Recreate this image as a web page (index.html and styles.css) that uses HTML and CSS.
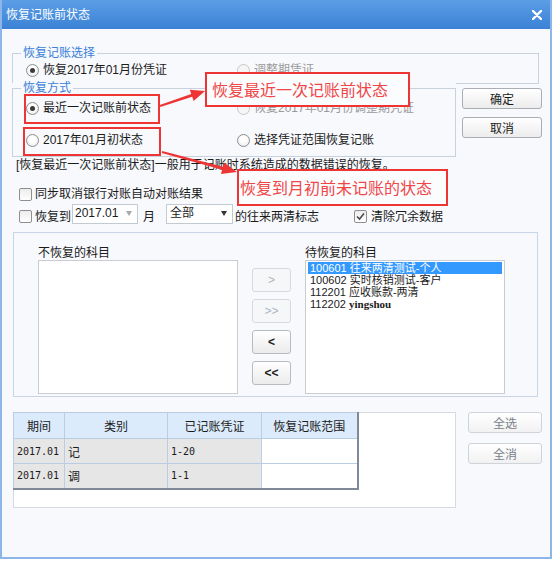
FILE: index.html
```html
<!DOCTYPE html>
<html lang="zh-CN">
<head>
  <meta charset="UTF-8" />
  <title>恢复记账前状态</title>
  <link rel="stylesheet" href="styles.css">
</head>
<body>

  <div class="window">
    <div class="titlebar">
      <span class="title">恢复记账前状态</span>
      <svg class="close" width="10" height="10" viewBox="0 0 10 10">
        <path d="M1 1 L9 9 M9 1 L1 9" stroke="#fff" stroke-width="2.4" stroke-linecap="round" />
      </svg>
    </div>

    <div class="content">
      <fieldset class="group group-select">
        <legend>恢复记账选择</legend>
        <div class="opts">
          <label class="opt"><span class="radio checked"></span>恢复2017年01月份凭证</label>
          <label class="opt disabled"><span class="radio"></span>调整期凭证</label>
        </div>
      </fieldset>

      <div class="mode-row">
        <fieldset class="group group-mode">
          <legend>恢复方式</legend>
          <div class="opts">
            <label class="opt"><span class="radio checked"></span>最近一次记账前状态</label>
            <label class="opt disabled"><span class="radio"></span>恢复2017年01月份调整期凭证</label>
            <label class="opt"><span class="radio"></span>2017年01月初状态</label>
            <label class="opt"><span class="radio"></span>选择凭证范围恢复记账</label>
          </div>
        </fieldset>
        <div class="side">
          <button class="btn">确定</button>
          <button class="btn">取消</button>
        </div>
      </div>

      <p class="desc">[恢复最近一次记账前状态]一般用于记账时系统造成的数据错误的恢复。</p>

      <div class="check-row">
        <span class="checkbox"></span>
        <span>同步取消银行对账自动对账结果</span>
      </div>

      <div class="check-row row-restore">
        <span class="checkbox"></span>
        <span>恢复到</span>
        <span class="combo combo-date"><span>2017.01</span><i class="caret grey"></i></span>
        <span class="month">月</span>
        <span class="combo combo-all"><span>全部</span><i class="caret"></i></span>
        <span class="flag">的往来两清标志</span>
        <span class="checkbox checked">
          <svg width="11" height="11" viewBox="0 0 11 11"><polyline points="2,5.5 4.5,8 9,2.5" fill="none" stroke="#4a4a4a" stroke-width="1.6" /></svg>
        </span>
        <span>清除冗余数据</span>
      </div>

      <div class="subjects">
        <div class="list-col">
          <div class="list-label">不恢复的科目</div>
          <div class="list"></div>
        </div>
        <div class="move-btns">
          <button class="small-btn off">&gt;</button>
          <button class="small-btn off">&gt;&gt;</button>
          <button class="small-btn">&lt;</button>
          <button class="small-btn">&lt;&lt;</button>
        </div>
        <div class="list-col">
          <div class="list-label">待恢复的科目</div>
          <div class="list">
            <div class="item selected">100601 往来两清测试-个人</div>
            <div class="item">100602 实时核销测试-客户</div>
            <div class="item">112201 应收账款-两清</div>
            <div class="item">112202 <span class="latin">yingshou</span></div>
          </div>
        </div>
      </div>

      <div class="bottom">
        <div class="table-box">
          <table class="periods">
            <tr>
              <th class="c1">期间</th>
              <th class="c2">类别</th>
              <th class="c3">已记账凭证</th>
              <th class="c4">恢复记账范围</th>
            </tr>
            <tr>
              <td class="mono">2017.01</td>
              <td>记</td>
              <td class="mono">1-20</td>
              <td class="blank"></td>
            </tr>
            <tr>
              <td class="mono">2017.01</td>
              <td>调</td>
              <td class="mono">1-1</td>
              <td class="blank"></td>
            </tr>
          </table>
        </div>
        <div class="select-btns">
          <button class="btn light">全选</button>
          <button class="btn light">全消</button>
        </div>
      </div>
    </div>
  </div>

  <!-- red annotations drawn over the dialog -->
  <div class="note note-a"></div>
  <div class="note note-b"></div>
  <div class="note note-c">恢复最近一次记账前状态</div>
  <div class="note note-d">恢复到月初前未记账的状态</div>
  <svg class="arrows" width="554" height="561">
    <polygon points="159.7,105 191.2,94 189.8,89.7 205,91 193.6,101.1 192.2,96.8 160.3,107" fill="#ee3535" />
    <polygon points="162.2,151 222.9,166.8 224,162.4 237,172 221,174 222.1,169.7 161.8,153" fill="#ee3535" />
  </svg>

</body>
</html>
```

FILE: styles.css
```css
* {
  box-sizing: border-box;
}

body {
  margin: 0;
  font-family: "Liberation Sans", "Noto Sans CJK SC", sans-serif;
  font-size: 12px;
  color: #1b1b1b;
  background: #fff;
}

.window {
  width: 552px;
  height: 559px;
  border: 2px solid #8db5e8;
  border-top: none;
  background: #f7f9fd;
  overflow: hidden;
}

.titlebar {
  height: 29px;
  display: flex;
  align-items: center;
  justify-content: space-between;
  padding: 0 8px 0 4px;
  background: linear-gradient(#5b9ee6, #3b82d6);
  color: #fff;
}

.title {
  font-size: 12px;
  line-height: 14px;
}

.content {
  padding: 0 8px 0 10px;
}

/* group boxes */
.group {
  margin: 0;
  padding: 0 0 0 8px;
  border: 1px solid #c8d2de;
  min-width: 0;
}

.group legend {
  padding: 0 2px;
  line-height: 14px;
  color: #3b7fd8;
}

.group-select {
  margin-top: 17px;
  width: 527px;
  border-bottom: none;
  padding-top: 3px;
  padding-bottom: 6px;
}

.opts {
  margin-left: 5px;
  display: grid;
  grid-template-columns: 211px auto;
  row-gap: 18px;
}

.opt {
  display: flex;
  align-items: center;
  gap: 4px;
  height: 14px;
  line-height: 14px;
  white-space: nowrap;
}

.opt.disabled {
  color: #9a9a9a;
}

.radio {
  width: 13px;
  height: 13px;
  border-radius: 50%;
  border: 1px solid #8e8e8e;
  background: radial-gradient(circle at 50% 40%, #fff 30%, #e4e4e4 100%);
  display: flex;
  align-items: center;
  justify-content: center;
  flex-shrink: 0;
}

.radio.checked::after {
  content: '';
  width: 5px;
  height: 5px;
  border-radius: 50%;
  background: #3a3a3a;
}

.opt.disabled .radio {
  border-color: #c8c8c8;
  background: #f5f5f5;
}

.mode-row {
  display: flex;
  margin-top: -2px;
}

.group-mode {
  width: 444px;
  padding-top: 6px;
  padding-bottom: 9px;
}

.side {
  width: 86px;
  display: flex;
  flex-direction: column;
}

.side::before {
  content: '';
  display: block;
  width: 83px;
  height: 1px;
  margin-top: 2px;
  background: #c8d2de;
}

.btn {
  font-family: inherit;
  font-size: 12px;
  color: #1b1b1b;
  border: 1px solid #a9aeb4;
  border-radius: 3px;
  background: linear-gradient(#ffffff, #ececec);
  padding: 0;
}

.side .btn {
  width: 80px;
  height: 21px;
  margin-left: 6px;
  margin-top: 4px;
}

.side .btn + .btn {
  margin-top: 8px;
}

.desc {
  margin: 1px 0 0 4px;
  line-height: 14px;
  white-space: nowrap;
}

/* checkbox rows */
.check-row {
  display: flex;
  align-items: center;
  margin: 15px 0 0 7px;
  line-height: 14px;
  white-space: nowrap;
}

.checkbox {
  width: 13px;
  height: 13px;
  margin-right: 3px;
  border: 1px solid #8f8f8f;
  border-radius: 2px;
  background: linear-gradient(#ececec, #fff);
  display: flex;
  align-items: center;
  justify-content: center;
  flex-shrink: 0;
}

.row-restore {
  margin-top: 3px;
  align-items: flex-end;
  height: 20px;
}

.row-restore .checkbox {
  margin-bottom: 1px;
}

.combo {
  height: 20px;
  display: flex;
  justify-content: space-between;
  align-items: flex-start;
  padding: 1px 5px 0 2px;
  border: 1px solid #c4cad1;
  background: #fff;
}

.combo-date {
  width: 66px;
  margin-left: 1px;
}

.combo-all {
  width: 67px;
  margin-left: 11px;
  padding-left: 3px;
}

.caret {
  margin-top: 5px;
  width: 0;
  height: 0;
  border-left: 3.5px solid transparent;
  border-right: 3.5px solid transparent;
  border-top: 5px solid #333;
}

.caret.grey {
  border-top-color: #a9a9a9;
}

.month {
  margin-left: 5px;
}

.flag {
  margin-left: 2px;
}

.checkbox.checked {
  margin-left: 35px;
  margin-right: 4px;
}

/* subject lists */
.subjects {
  margin: 8px 0 0 1px;
  width: 525px;
  height: 165px;
  border: 1px solid #c8d5e6;
  display: flex;
  padding: 14px 0 0 24px;
}

.list-col {
  width: 200px;
}

.list-label {
  line-height: 13px;
}

.list {
  height: 134px;
  border: 1px solid #c9cdd2;
  background: #fff;
  padding: 1px 2px;
}

.item {
  height: 12px;
  line-height: 12px;
  font-size: 11px;
  padding-left: 2px;
  white-space: nowrap;
  overflow: hidden;
}

.item.selected {
  background: #3399ff;
  color: #fff;
}

.latin {
  font-family: "Liberation Serif", serif;
  font-weight: bold;
}

.move-btns {
  display: flex;
  flex-direction: column;
  gap: 7px;
  margin: 21px 14px 0;
}

.small-btn {
  width: 39px;
  height: 24px;
  padding: 0;
  font-family: "Liberation Sans", sans-serif;
  font-size: 12px;
  font-weight: bold;
  color: #222;
  border: 1px solid #b8bcc1;
  border-radius: 3px;
  background: linear-gradient(#ffffff, #ebebeb);
}

.small-btn.off {
  color: #a9b6c4;
  font-weight: normal;
  border-color: #d6d9dd;
  background: #f6f7f8;
}

/* period table */
.bottom {
  display: flex;
  margin: 15px 0 0 1px;
}

.table-box {
  width: 445px;
  height: 96px;
  border: 1px solid #d5dae0;
  background: #fff;
}

.periods {
  margin: -1px 0 0 -1px;
  border-collapse: collapse;
  border-right: 2px solid #7f8997;
  border-bottom: 2px solid #7f8997;
}

.periods th,
.periods td {
  border: 1px solid #bacde3;
  padding: 0 0 0 3px;
  text-align: left;
  font-weight: normal;
}

.periods th {
  height: 26px;
  background: #dcebfb;
  text-align: center;
  padding: 0;
}

.periods td {
  height: 25px;
  background: #e6e6e6;
}

.periods td.blank {
  background: #fff;
}

.periods .mono {
  font-family: "DejaVu Sans Mono", monospace;
  font-size: 10px;
}

.c1 { width: 51px; }
.c2 { width: 103px; }
.c3 { width: 94px; }
.c4 { width: 96px; }

.select-btns {
  display: flex;
  flex-direction: column;
  gap: 10px;
  margin-left: 12px;
}

.select-btns .btn {
  width: 74px;
  height: 21px;
  color: #7a8089;
  border-color: #cfd4da;
  background: linear-gradient(#ffffff, #f1f1f1);
}

/* annotations */
.note {
  position: absolute;
  border: 2px solid #ef3434;
}

.note-a {
  left: 24px;
  top: 94px;
  width: 136px;
  height: 30px;
}

.note-b {
  left: 23px;
  top: 127px;
  width: 138px;
  height: 29px;
}

.note-c,
.note-d {
  background: #fbfcfe;
  color: #f04646;
  font-family: "Noto Sans CJK SC", sans-serif;
  font-size: 16px;
  white-space: nowrap;
}

.note-c {
  left: 205px;
  top: 72px;
  width: 205px;
  height: 35px;
  line-height: 31px;
  padding-left: 5px;
}

.note-d {
  left: 237px;
  top: 169px;
  width: 211px;
  height: 37px;
  line-height: 33px;
  padding-left: 1px;
}

.arrows {
  position: absolute;
  left: 0;
  top: 0;
  pointer-events: none;
}
```
